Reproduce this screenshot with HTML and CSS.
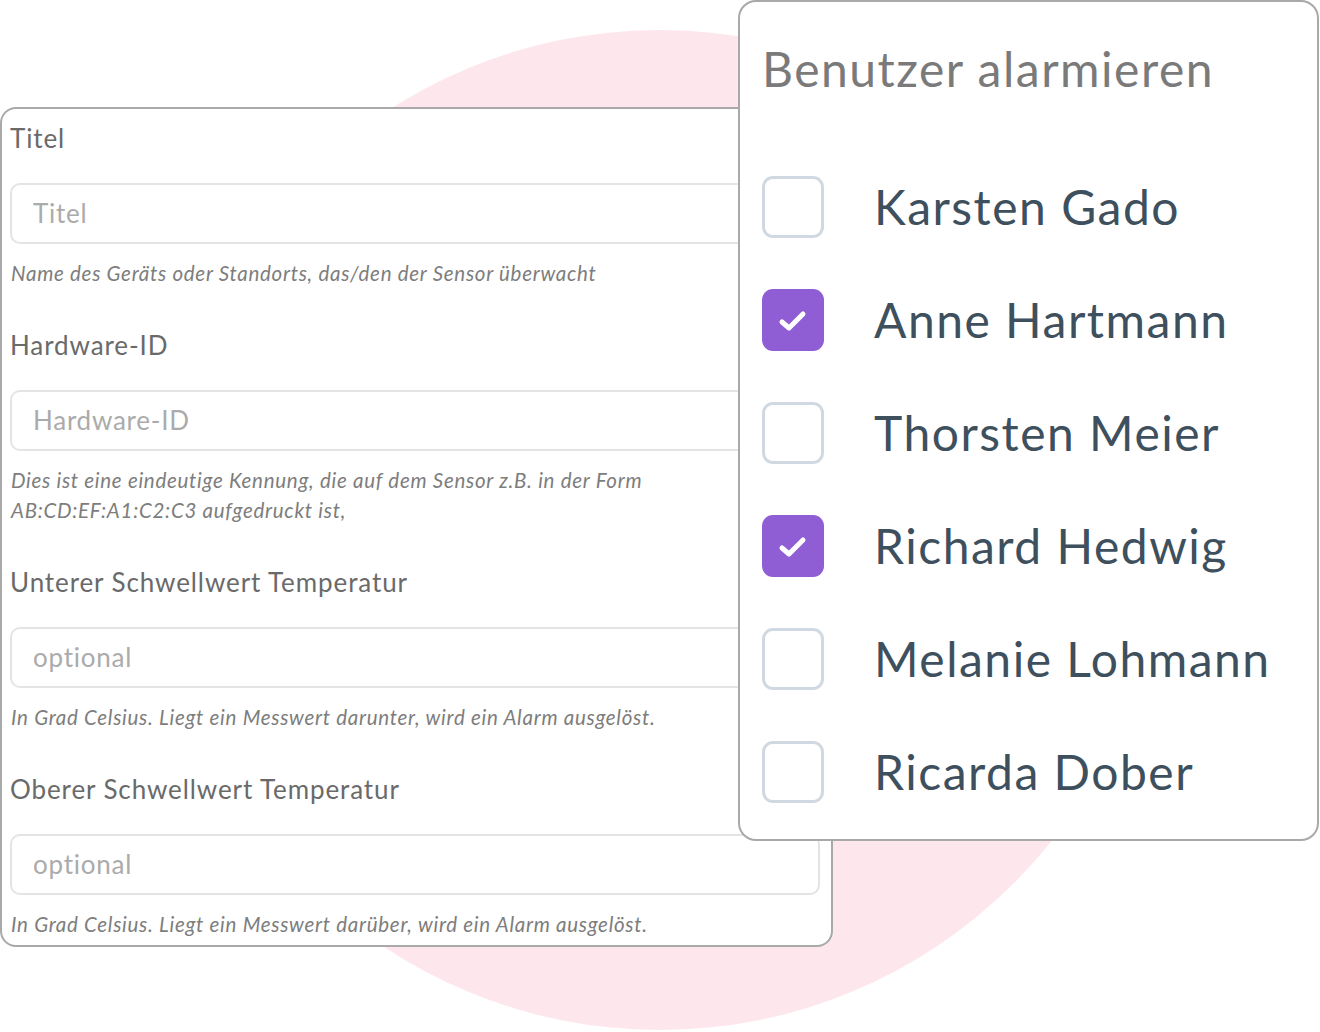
FILE: index.html
```html
<!DOCTYPE html>
<html lang="de">
<head>
<meta charset="utf-8">
<title>Sensor</title>
<link rel="stylesheet" href="styles.css">
</head>
<body>
<div class="stage">
  <div class="blob"></div>

  <form class="card form-card">
    <div class="group">
      <label class="label">Titel</label>
      <div class="input">Titel</div>
      <p class="help">Name des Geräts oder Standorts, das/den der Sensor überwacht</p>
    </div>
    <div class="group">
      <label class="label">Hardware-ID</label>
      <div class="input">Hardware-ID</div>
      <p class="help">Dies ist eine eindeutige Kennung, die auf dem Sensor z.B. in der Form<br>AB:CD:EF:A1:C2:C3 aufgedruckt ist,</p>
    </div>
    <div class="group">
      <label class="label">Unterer Schwellwert Temperatur</label>
      <div class="input">optional</div>
      <p class="help">In Grad Celsius. Liegt ein Messwert darunter, wird ein Alarm ausgelöst.</p>
    </div>
    <div class="group">
      <label class="label">Oberer Schwellwert Temperatur</label>
      <div class="input">optional</div>
      <p class="help">In Grad Celsius. Liegt ein Messwert darüber, wird ein Alarm ausgelöst.</p>
    </div>
  </form>

  <div class="card alarm-card">
    <h2 class="alarm-title">Benutzer alarmieren</h2>
    <ul class="users">
      <li class="user"><span class="box"></span><span class="name">Karsten Gado</span></li>
      <li class="user"><span class="box checked"><svg viewBox="0 0 62 62" width="62" height="62"><polyline points="20,33 27,39 41,25" fill="none" stroke="#fff" stroke-width="5" stroke-linecap="round" stroke-linejoin="round"/></svg></span><span class="name">Anne Hartmann</span></li>
      <li class="user"><span class="box"></span><span class="name">Thorsten Meier</span></li>
      <li class="user"><span class="box checked"><svg viewBox="0 0 62 62" width="62" height="62"><polyline points="20,33 27,39 41,25" fill="none" stroke="#fff" stroke-width="5" stroke-linecap="round" stroke-linejoin="round"/></svg></span><span class="name">Richard Hedwig</span></li>
      <li class="user"><span class="box"></span><span class="name">Melanie Lohmann</span></li>
      <li class="user"><span class="box"></span><span class="name">Ricarda Dober</span></li>
    </ul>
  </div>
</div>
</body>
</html>
```

FILE: styles.css
```css
* { box-sizing: border-box; }
html, body {
  margin: 0;
  padding: 0;
  background: #ffffff;
}
body {
  font-family: Lato, "Noto Sans", "DejaVu Sans", sans-serif;
}
.stage {
  position: relative;
  width: 1320px;
  height: 1032px;
  overflow: hidden;
}
.blob {
  position: absolute;
  left: 160px;
  top: 30px;
  width: 1000px;
  height: 1000px;
  border-radius: 50%;
  background: #fde7ed;
}
.card {
  background: #ffffff;
  border: 2px solid #a9a9a9;
}
.form-card {
  position: absolute;
  left: 0;
  top: 107px;
  width: 833px;
  height: 840px;
  border-radius: 16px;
  padding: 9px 11px 0 8px;
  margin: 0;
  display: flex;
  flex-direction: column;
}
.group {
  display: flex;
  flex-direction: column;
  margin-bottom: 37px;
}
.label {
  font-size: 26px;
  line-height: 40px;
  color: #6a6a6a;
  letter-spacing: 0.9px;
}
.input {
  margin-top: 25px;
  height: 61px;
  border: 2px solid #e4e4e4;
  border-radius: 10px;
  padding: 0 21px;
  font-size: 26px;
  line-height: 57px;
  color: #ababab;
  letter-spacing: 0.75px;
}
.help {
  margin: 14px 0 0 1px;
  font-size: 20.5px;
  line-height: 30px;
  font-style: italic;
  color: #7d7d7d;
  letter-spacing: 0.72px;
}
.alarm-card {
  position: absolute;
  left: 738px;
  top: 0;
  width: 581px;
  height: 841px;
  border-radius: 18px;
  padding: 36px 20px 0 22px;
}
.alarm-title {
  margin: 0;
  font-weight: 400;
  font-size: 48px;
  line-height: 62px;
  color: #7a7a7a;
  letter-spacing: 1.5px;
}
.users {
  list-style: none;
  margin: 76px 0 0;
  padding: 0;
  display: flex;
  flex-direction: column;
  gap: 51px;
}
.user {
  display: flex;
  align-items: center;
  gap: 50px;
  height: 62px;
}
.box {
  flex: none;
  width: 62px;
  height: 62px;
  border: 3px solid #d0d9e1;
  border-radius: 11px;
  background: #ffffff;
  display: flex;
}
.box.checked {
  border: none;
  background: #8f5dd4;
}
.name {
  font-size: 48px;
  line-height: 62px;
  color: #3e505d;
  letter-spacing: 1.5px;
}
```
